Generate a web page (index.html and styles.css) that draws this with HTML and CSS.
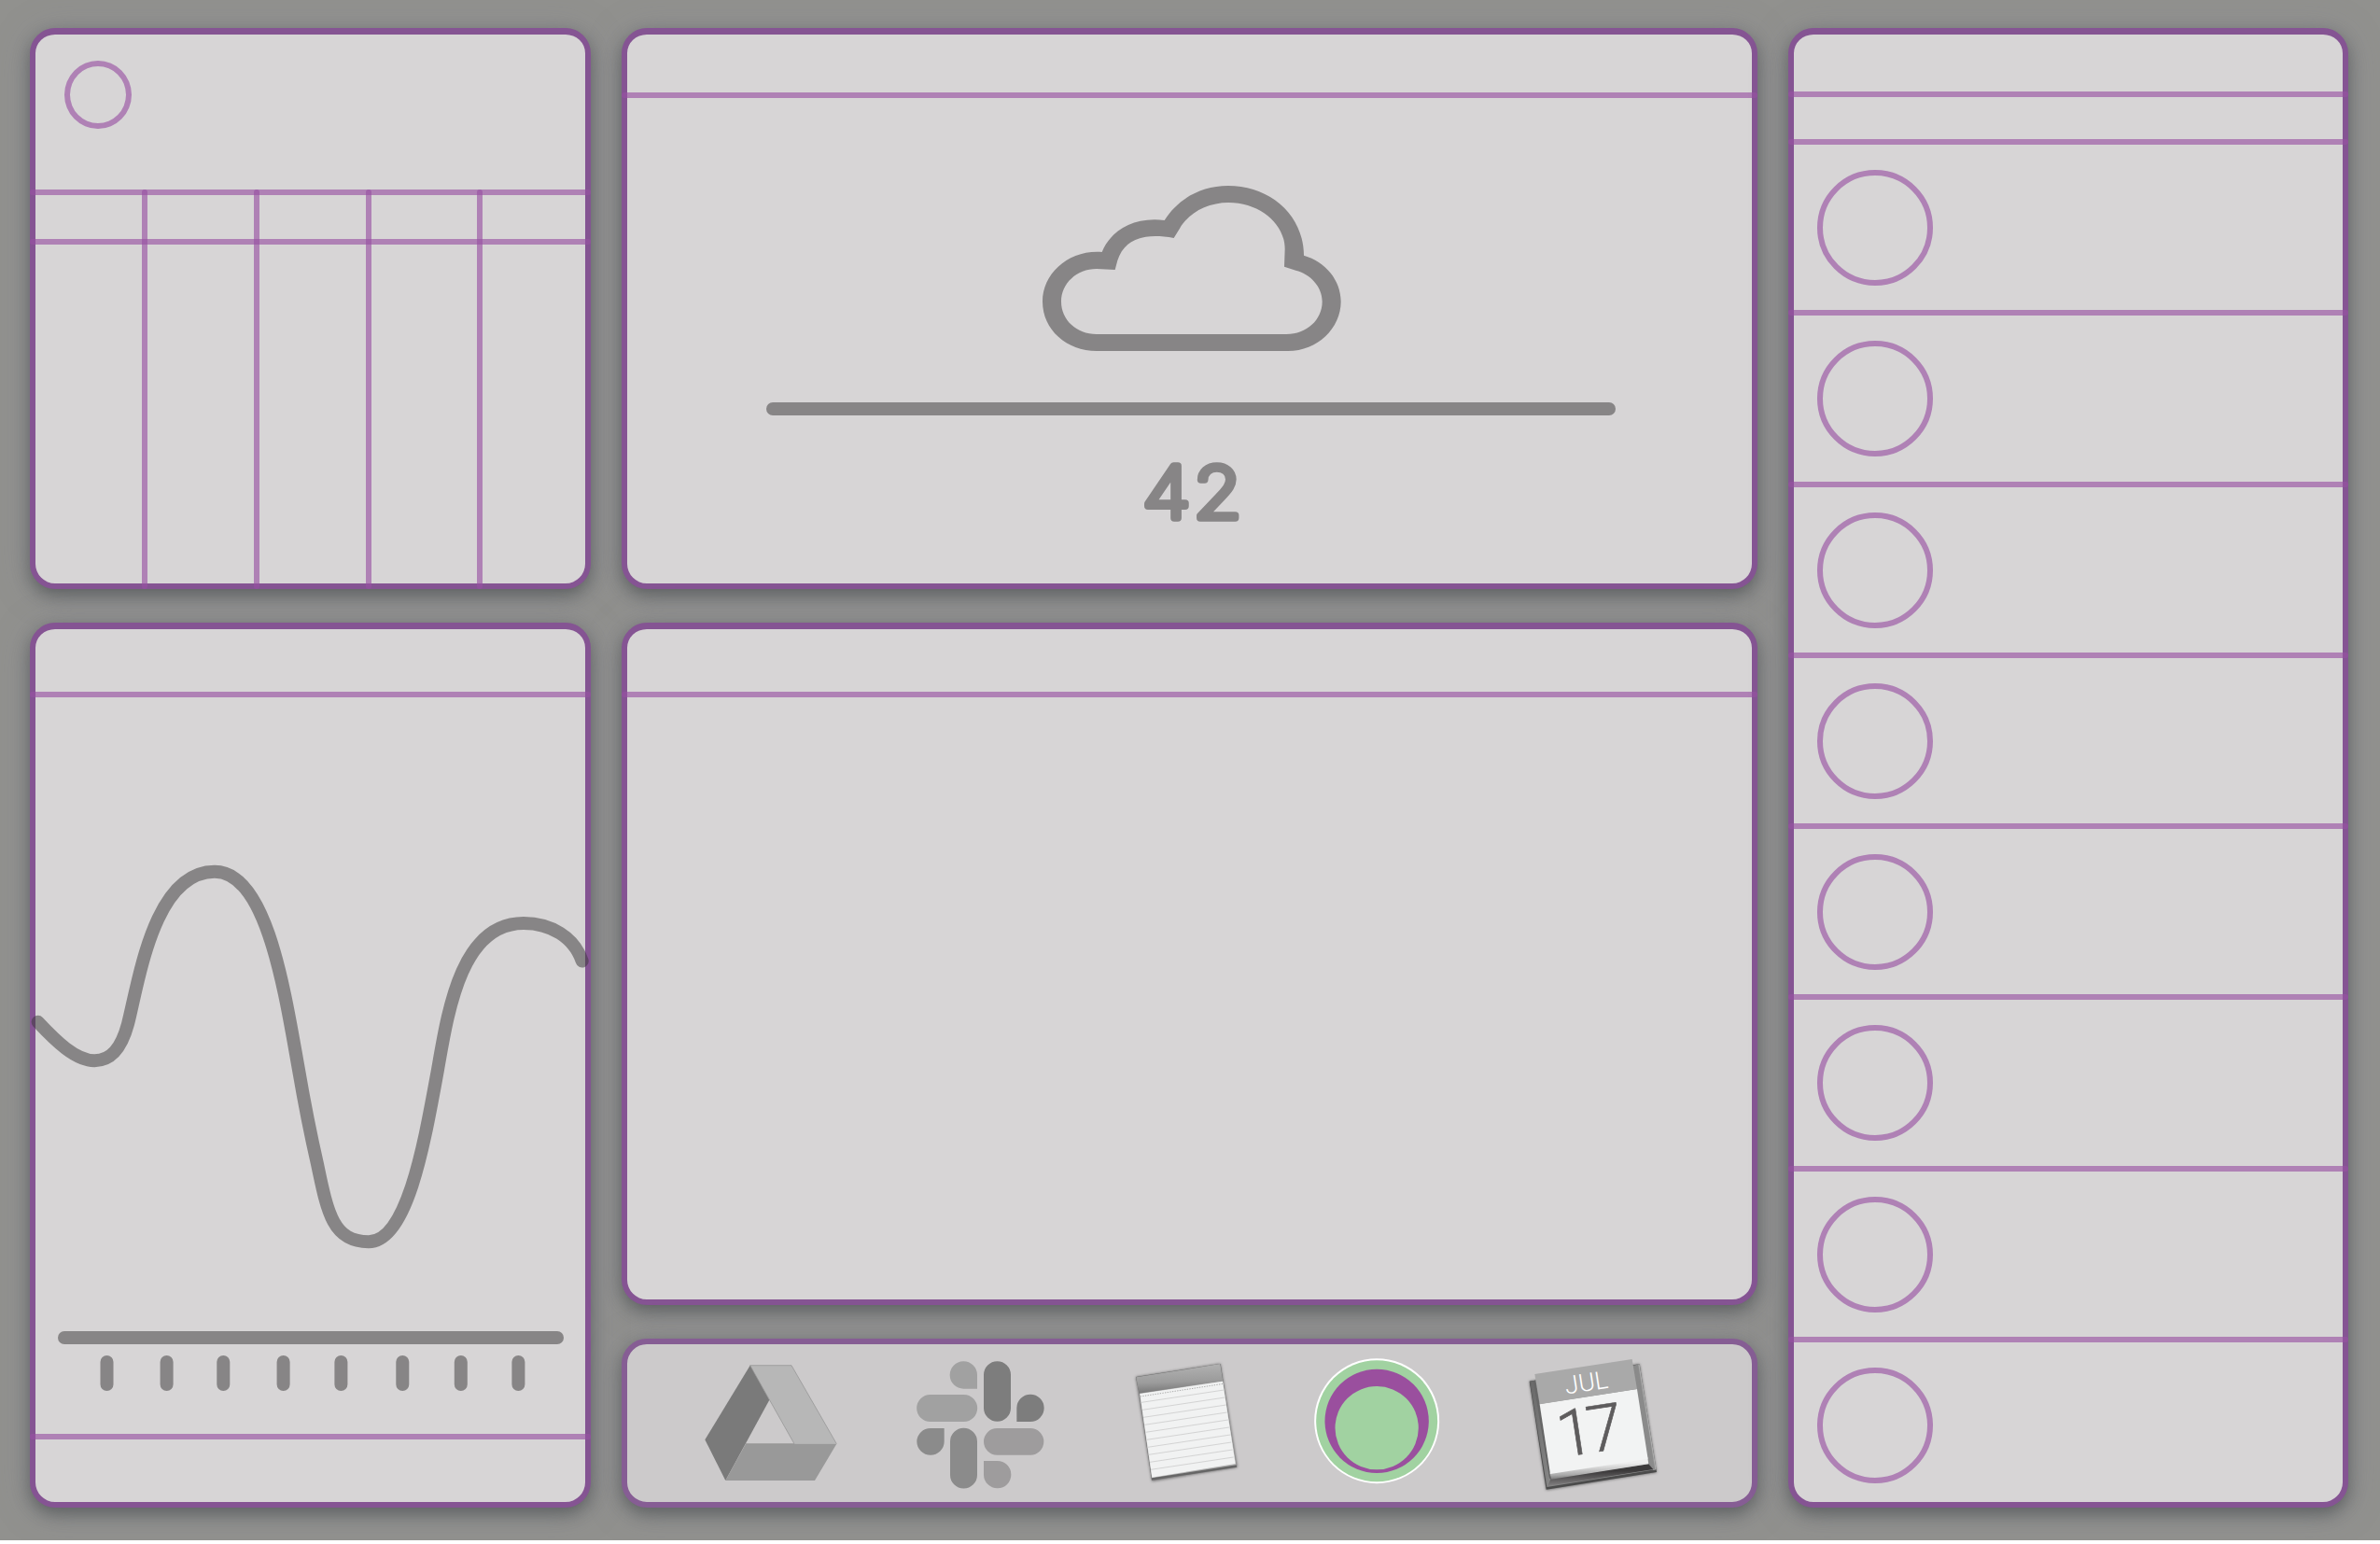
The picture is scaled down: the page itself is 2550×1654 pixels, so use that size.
FILE: index.html
```html
<!DOCTYPE html>
<html lang="en">
<head>
<meta charset="utf-8">
<title>Dashboard</title>
<link rel="stylesheet" href="styles.css">
</head>
<body>
<main class="board">
  <div class="column">
    <section class="panel schedule">
      <header class="schedule-head"><span class="ring ring-small"></span></header>
      <div class="timetable">
        <div class="timetable-rows"><i class="rule"></i><i class="rule"></i></div>
        <div class="timetable-cols"><i></i><i></i><i></i><i></i></div>
      </div>
    </section>
    <section class="panel chart">
      <header class="bar chart-head"></header>
      <i class="rule"></i>
      <svg class="plot" viewBox="32 747 601 789">
        <path class="curve" d="M40.6 1094.8C60 1115.500 81 1136.200 101.3 1136.200C119 1136.200 130 1123 137 1097C149 1050 165 933.8 230 933.8C286 933.8 305 1062 320 1146C326 1181 332 1212 340 1247C351 1300 357 1330.200 395 1330.200C437 1330.200 455 1222 469 1146C480 1083 494 989 561 989C590 989 615 1004 623.7 1029.500"/>
        <path class="axis" d="M69 1433H597"/>
        <path class="axis" d="M114.5 1459V1483M178.6 1459V1483M239.3 1459V1483M303.6 1459V1483M365.4 1459V1483M431.3 1459V1483M493.8 1459V1483M555.4 1459V1483"/>
      </svg>
      <i class="rule"></i>
    </section>
  </div>

  <div class="column">
    <section class="panel weather">
      <header class="bar weather-head"></header>
      <i class="rule"></i>
      <svg class="cloud" viewBox="111 117 960 531">
        <path fill-rule="evenodd" d="M285 648C189 648 111 580 111 489C111 399 195 322 302 330C328 265 400 215 503 228C545 160 620 117 707 117C840 117 950 208 951 341C1020 361 1070 420 1070 489C1070 575 995 648 900 648ZM285 594H895C960 594 1010 548 1010 489C1010 440 970 400 925 389L888 377L890 320C890 240 810 171 709 171C640 171 580 205 552 254L533 285C435 268 375 288 352 357L344 387L285 384C220 384 171 432 171 489C171 548 220 594 285 594Z"/>
      </svg>
      <div class="divider"></div>
      <svg class="reading" viewBox="0 0 200 110"><text transform="translate(102 81.500) scale(1.060 .97)" text-anchor="middle">42</text></svg>
    </section>
    <section class="panel viewer">
      <header class="bar viewer-head"></header>
      <i class="rule"></i>
    </section>
    <nav class="panel dock">
      <svg class="drive" viewBox="106 95 426 375">
        <path fill="#b7b7b7" d="M252 97H385L530 349H394Z"/>
        <path fill="#7a7a7a" d="M252 97L314 208L173 467L107 336Z"/>
        <path fill="#999" d="M238 349H530L460 467H173Z"/>
        <path fill="none" stroke="#8f8f8f" stroke-width="2" d="M252 97H385L530 349M252 97L394 349M238 349H394"/>
      </svg>
      <svg class="slack" viewBox="786 84 411 411">
        <path fill="#a1a1a1" d="M981 173H938A44 44 0 1 1 981 129ZM830 192H938A43 43 0 0 1 938 279H830A43 43 0 0 1 830 192Z"/>
        <path fill="#7d7d7d" d="M1002 128A43 43 0 0 1 1089 128V235A43 43 0 0 1 1002 235ZM1108 279V235A44 44 0 1 1 1152 279Z"/>
        <path fill="#8b8b8b" d="M875 300V343A44 43 0 1 1 831 300ZM894 343A43 43 0 0 1 981 343V450A43 43 0 0 1 894 450Z"/>
        <path fill="#9e9c9d" d="M1045 300H1152A43 43 0 0 1 1152 386H1045A43 43 0 0 1 1045 300ZM1002 405H1045A44 44 0 1 1 1002 449Z"/>
      </svg>
      <svg class="notes" viewBox="105 85 340 395">
        <defs>
          <linearGradient id="cap" x1="0" y1="0" x2=".12" y2="1"><stop offset="0" stop-color="#b5b5b5"/><stop offset=".65" stop-color="#9c9c9c"/><stop offset="1" stop-color="#777"/></linearGradient>
        </defs>
        <path class="soft" d="M111 136L383 94L437 426L163 471Z"/>
        <path fill="#666" d="M111 136L122 190L162 468L436 426L434 420L383 94Z"/>
        <path fill="#b5b5b5" d="M122 187L391 148L434 419L162 461Z"/>
        <path fill="#f1f2f2" d="M124 190L390 150L431 415L163 459Z"/>
        <path fill="url(#cap)" d="M112 137L382 94L391 149L121 189Z"/>
        <path fill="none" stroke="#aaa" stroke-width="3" stroke-dasharray="4 4" d="M125 199L392 158"/>
        <path fill="none" stroke="#ccc" stroke-width="2.5" d="M129 218L394 178M132 242L397 202M135 266L401 226M139 290L404 250M142 314L408 274M146 338L411 298M149 362L415 322M152 386L418 346M156 410L422 370M159 434L425 394"/>
      </svg>
      <svg class="rings" viewBox="683 75 403 403">
        <circle cx="884.5" cy="276.500" r="201" fill="#fff"/>
        <circle cx="884.5" cy="277" r="195" fill="#a1d2a1"/>
        <circle cx="884.5" cy="277" r="167" fill="#9a4f9e"/>
        <circle cx="884.5" cy="299" r="134" fill="#a1d2a1"/>
      </svg>
      <svg class="calendar" viewBox="105 220 430 440">
        <defs>
          <linearGradient id="base" x1="0" y1="0" x2="1" y2="0"><stop offset="0" stop-color="#666"/><stop offset=".15" stop-color="#858585"/><stop offset="1" stop-color="#8b8b8b"/></linearGradient>
          <linearGradient id="fold" x1="0" y1="0" x2=".12" y2="1"><stop offset=".35" stop-color="#eee"/><stop offset=".8" stop-color="#aaa"/><stop offset="1" stop-color="#777"/></linearGradient>
          <linearGradient id="under" x1="0" y1="0" x2=".14" y2="1"><stop offset=".4" stop-color="#3c3a3b"/><stop offset="1" stop-color="#858384"/></linearGradient>
        </defs>
        <path class="soft" d="M116 300L470 245L525 593L170 650Z"/>
        <path fill="#4b4b4b" d="M116 300L470 245L525 592L170 648Z"/>
        <path fill="#aaa" d="M460 247L470 245L524 584L514 586Z"/>
        <path fill="url(#base)" d="M117 300L466 246L520 584L172 640Z"/>
        <path fill="#666" d="M128 298L135 297L188 614L180 612Z"/>
        <path fill="url(#under)" d="M185 612L499 566L514 583L175 637Z"/>
        <path fill="url(#fold)" d="M181 594L496 545L499 566L187 615Z"/>
        <path fill="#f2f3f3" d="M149 373L462 325L497 549L183 598Z"/>
        <path fill="#a9a9a9" d="M133 277L446 229L462 325L149 374Z"/>
        <g transform="translate(303 331) rotate(-8.700)"><text class="month" text-anchor="middle">JUL</text></g>
        <g transform="translate(312 530) rotate(-8.700)"><text class="day" text-anchor="middle">17</text></g>
      </svg>
    </nav>
  </div>

  <aside class="panel people">
    <header class="bar people-head"></header>
    <i class="rule"></i>
    <div class="people-filter"></div>
    <ul class="list">
      <li><span class="ring"></span></li>
      <li><span class="ring"></span></li>
      <li><span class="ring"></span></li>
      <li><span class="ring"></span></li>
      <li><span class="ring"></span></li>
      <li><span class="ring"></span></li>
      <li><span class="ring"></span></li>
      <li><span class="ring"></span></li>
    </ul>
  </aside>
</main>
</body>
</html>
```
FILE: styles.css
```css
:root {
  --line: rgba(152, 82, 162, .64);
  --ink: #878586;
}

* { box-sizing: border-box; }

body {
  margin: 0;
  background: #fff;
}

.board {
  display: grid;
  grid-template-columns: 601px 1217px 600px;
  grid-template-rows: 1585px;
  column-gap: 33px;
  height: 1650px;
  padding: 30px 34px 35px 32px;
  background: #91918e;
}

.column {
  display: flex;
  flex-direction: column;
  gap: 36px;
}

.panel {
  display: flex;
  flex-direction: column;
  border: 6px solid #855493;
  border-top-width: 7px;
  border-radius: 27px;
  background: #d7d5d6;
  box-shadow: 0 7px 18px rgba(25, 32, 32, .4), 0 4px 40px rgba(125, 125, 150, .3);
}

/* Separators run over the panel's own border on both sides. */
.rule {
  display: block;
  flex: none;
  height: 6px;
  margin: 0 -6px;
  border-radius: 3px;
  background: var(--line);
}

.ring {
  display: block;
  width: 124px;
  height: 124px;
  border: 6px solid var(--line);
  border-radius: 50%;
}

.ring-small {
  width: 72px;
  height: 73px;
}

/* Schedule */
.schedule { height: 601px; }

.schedule-head {
  height: 166px;
  padding: 28px 31px;
}

.timetable {
  display: grid;
  flex: 1;
  margin: 0 -6px -6px;
}

.timetable-rows,
.timetable-cols { grid-area: 1 / 1; }

.timetable-rows .rule { margin: 0 0 47px; }

.timetable-cols {
  display: grid;
  grid-template-columns: 126px 120px 120px 119px;
}

.timetable-cols i {
  width: 6px;
  border-radius: 3px;
  background: var(--line);
  justify-self: end;
}

/* Chart */
.chart { flex: 1; }
.chart-head { height: 67px; }

.plot {
  display: block;
  flex: none;
  width: 601px;
  height: 789px;
  margin: 0 -6px;
}

.curve,
.axis {
  fill: none;
  stroke: rgba(55, 53, 54, .5);
  stroke-width: 14;
  stroke-linecap: round;
}

/* Weather */
.weather {
  align-items: center;
  height: 601px;
}

.weather .rule { align-self: stretch; }
.weather-head { height: 62px; }

.cloud {
  width: 320px;
  height: 177px;
  margin: 94px 0 0 5px;
  fill: var(--ink);
}

.divider {
  width: 910px;
  height: 14px;
  margin: 55px 0 0 3px;
  border-radius: 7px;
  background: var(--ink);
}

.reading {
  width: 200px;
  height: 110px;
  margin: 28px 0 0 4px;
  overflow: visible;
  fill: var(--ink);
  stroke: var(--ink);
  stroke-width: 7.500;
  stroke-linejoin: round;
  font: 200 79px Inter, "Liberation Sans", sans-serif;
  letter-spacing: 3px;
}

/* Viewer */
.viewer { height: 731px; }
.viewer-head { height: 67px; }

/* Dock */
.dock {
  flex-direction: row;
  align-items: flex-start;
  height: 181px;
  border-top-width: 6px;
  border-color: #865d94;
  background: #cccacb;
}

.dock svg {
  flex: none;
  overflow: visible;
}

.drive { width: 142px; height: 125px; margin: 21.700px 0 0 83.300px; }
.slack { width: 137px; height: 137px; margin: 18px 0 0 84.700px; }
.notes { width: 113.300px; height: 131.700px; margin: 18.300px 0 0 96px; }
.rings { width: 134.300px; height: 134.300px; margin: 15px 0 0 79.400px; }
.calendar { width: 143.300px; height: 146.700px; margin: 13.300px 0 0 93px; }

.soft {
  fill: rgba(60, 60, 60, .7);
  filter: blur(5px);
}

.month {
  fill: #fff;
  font: 300 80px "Roboto", "Liberation Sans", sans-serif;
}

.day {
  fill: #5e5c5d;
  stroke: #5e5c5d;
  stroke-width: 2;
  font: 300 208px "Roboto", "Liberation Sans", sans-serif;
  letter-spacing: -18px;
}

/* People */
.people-head { height: 61px; }
.people-filter { height: 45px; }

.list {
  flex: 1;
  margin: 0 -6px;
  padding: 0;
  list-style: none;
}

.list li {
  height: 183.300px;
  padding: 27px 0 0 31px;
}

.list li:last-child { height: 170px; }

.list li::before {
  content: "";
  display: block;
  height: 6px;
  margin: -27px 0 27px -31px;
  border-radius: 3px;
  background: var(--line);
}
```
